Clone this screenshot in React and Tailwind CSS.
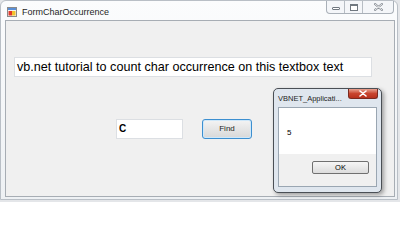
import React from 'react';

// Tiny WinForms app icon drawn in the title bar
function AppIcon() {
  return (
    <svg width="10" height="10" viewBox="0 0 10 10">
      <rect x="0.5" y="0.5" width="9" height="9" fill="#f4f4f4" stroke="#8a8a8a" />
      <rect x="1" y="1" width="8" height="2" fill="#5a8fd6" />
      <rect x="1.5" y="4" width="3.5" height="4.5" fill="#e0392b" />
      <rect x="5" y="4" width="3.5" height="4.5" fill="#f2c12e" />
    </svg>
  );
}

function CaptionButtons() {
  return (
    <div className="flex h-[13px] border border-t-0 border-[#a9b0b8] rounded-b-[4px] overflow-hidden bg-[#f4f6f9]">
      <div className="w-[18px] flex items-center justify-center border-r border-[#b7bdc4]">
        <div className="w-[8px] h-[3px] mt-[3px] border border-[#707880] rounded-[1px] bg-white" />
      </div>
      <div className="w-[18px] flex items-center justify-center border-r border-[#b7bdc4]">
        <div className="w-[8px] h-[7px] border border-[#707880] border-t-2 bg-white" />
      </div>
      <div className="w-[30px] flex items-center justify-center">
        <svg width="9" height="8" viewBox="0 0 9 8">
          <path d="M1 1 L8 7 M8 1 L1 7" stroke="#8a9098" strokeWidth="2.2" strokeLinecap="round" />
          <path d="M1 1 L8 7 M8 1 L1 7" stroke="#ffffff" strokeWidth="0.8" strokeLinecap="round" />
        </svg>
      </div>
    </div>
  );
}

function MessageBox() {
  return (
    <div className="absolute left-[273px] top-[88px] w-[109px] h-[105px] rounded-[5px] border border-[#4a4f55] bg-[#dfe6ee] shadow-[2px_2px_4px_rgba(0,0,0,0.35)] flex flex-col px-[4px]">
      <div className="h-[18px] flex items-start justify-between">
        <span className="text-[7.5px] leading-none mt-[6px] text-[#1e1e1e]" style={{ fontFamily: '"Liberation Sans", Arial, sans-serif' }}>
          VBNET_Applicati...
        </span>
        <div className="w-[30px] h-[10px] -mr-[1px] rounded-b-[3px] border border-t-0 border-[#7a2a1f] bg-gradient-to-b from-[#e8a190] via-[#c9452e] to-[#b8301c] flex items-center justify-center">
          <svg width="8" height="7" viewBox="0 0 8 7">
            <path d="M1 1 L7 6 M7 1 L1 6" stroke="#ffffff" strokeWidth="1.6" strokeLinecap="round" />
          </svg>
        </div>
      </div>
      <div className="flex-1 mb-[5px] border border-[#9aa6b2] flex flex-col">
        <div className="h-[46px] bg-white flex items-center pl-[8px]">
          <span className="text-[8px] text-black mt-[3px]" style={{ fontFamily: '"Liberation Sans", Arial, sans-serif' }}>5</span>
        </div>
        <div className="flex-1 bg-[#f0f0f0] flex justify-end items-start pt-[7px] pr-[7px]">
          <button className="w-[57px] h-[13px] rounded-[2px] border border-[#707070] bg-gradient-to-b from-[#f6f6f6] to-[#dcdcdc] text-[7.5px] leading-none text-black" style={{ fontFamily: '"Liberation Sans", Arial, sans-serif' }}>
            OK
          </button>
        </div>
      </div>
    </div>
  );
}

export default function App() {
  return (
    <div className="relative w-[400px] h-[202px] bg-[#e4e6e9] overflow-hidden">
      {/* Main form window */}
      <div className="w-[398px] h-[200px] rounded-t-[6px] border border-[#b9bfc6] bg-gradient-to-b from-[#fbfcfd] to-[#eef1f4] flex flex-col">
        <div className="h-[19px] flex items-start justify-between">
          <div className="flex items-center mt-[6px] ml-[6px] gap-[5px]">
            <AppIcon />
            <span className="text-[9px] leading-none text-[#1e1e1e]" style={{ fontFamily: '"Liberation Sans", Arial, sans-serif' }}>
              FormCharOccurrence
            </span>
          </div>
          <div className="mr-[3px]">
            <CaptionButtons />
          </div>
        </div>
        <div className="ml-[4px] w-[390px] h-[177px] border border-[#a7adb4] bg-[#f0f0f0] flex flex-col pt-[36px] pl-[8px]">
          <div className="w-[358px] h-[20px] bg-white border border-[#dcdfe3] flex items-center pl-[2px]">
            <span className="text-[12.6px] leading-none text-black whitespace-nowrap" style={{ fontFamily: '"Liberation Sans", Arial, sans-serif' }}>
              vb.net tutorial to count char occurrence on this textbox text
            </span>
          </div>
          <div className="flex items-center mt-[42px] ml-[102px] gap-[19px]">
            <div className="w-[67px] h-[20px] bg-white border border-[#dcdfe3] flex items-center pl-[2px]">
              <span className="text-[10px] font-bold leading-none text-black" style={{ fontFamily: '"Liberation Sans", Arial, sans-serif' }}>C</span>
            </div>
            <button className="w-[50px] h-[20px] rounded-[3px] border border-[#3c8fd0] bg-gradient-to-b from-[#f4f4f4] to-[#d8d8d8] shadow-[inset_0_0_0_1px_#cfe8fa] text-[8px] leading-none text-[#222]" style={{ fontFamily: '"Liberation Sans", Arial, sans-serif' }}>
              Find
            </button>
          </div>
        </div>
      </div>
      <MessageBox />
    </div>
  );
}
